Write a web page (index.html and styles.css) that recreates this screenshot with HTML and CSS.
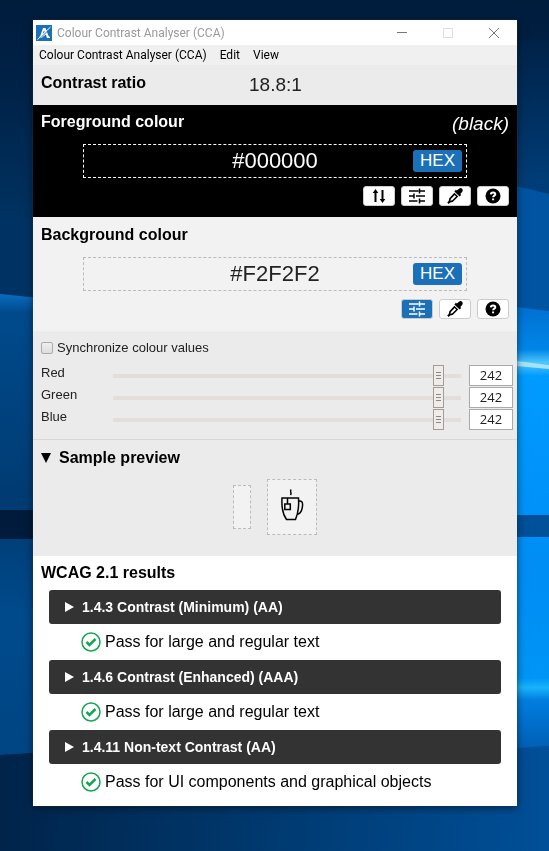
FILE: index.html
```html
<!DOCTYPE html>
<html lang="en">
<head>
<meta charset="utf-8">
<meta name="viewport" content="width=device-width, initial-scale=1">
<title>Colour Contrast Analyser (CCA)</title>
<link rel="stylesheet" href="styles.css">
</head>
<body>
<svg class="wallpaper" viewBox="0 0 549 851" preserveAspectRatio="none" aria-hidden="true">
  <defs>
    <linearGradient id="base" x1="0" y1="0" x2="0" y2="1"><stop offset="0" stop-color="#001c3d"/><stop offset=".1" stop-color="#002247"/><stop offset=".34" stop-color="#003a6e"/><stop offset="1" stop-color="#002449"/></linearGradient>
    <linearGradient id="leftPane" x1="0" y1="0" x2="0" y2="1"><stop offset="0" stop-color="#0a6cc0"/><stop offset=".04" stop-color="#004a8c"/><stop offset=".45" stop-color="#003b72"/><stop offset=".7" stop-color="#004a8c"/><stop offset="1" stop-color="#004583"/></linearGradient>
    <linearGradient id="rightTop" x1="0" y1="0" x2="0" y2="1"><stop offset="0" stop-color="#002248"/><stop offset=".5" stop-color="#003c76"/><stop offset="1" stop-color="#00509a"/></linearGradient>
    <linearGradient id="rightPane" x1="0" y1="0" x2="0" y2="1"><stop offset="0" stop-color="#006fd0"/><stop offset=".1" stop-color="#0086e8"/><stop offset=".13" stop-color="#4fc6fb"/><stop offset=".16" stop-color="#009bff"/><stop offset=".6" stop-color="#008df4"/><stop offset=".84" stop-color="#0095f6"/><stop offset=".862" stop-color="#19b3fb"/><stop offset=".89" stop-color="#007ee0"/><stop offset="1" stop-color="#005fb4"/></linearGradient>
    <linearGradient id="bottom" x1="0" y1="0" x2="1" y2="0"><stop offset="0" stop-color="#00244a"/><stop offset=".5" stop-color="#003a70"/><stop offset="1" stop-color="#004f98"/></linearGradient>
  </defs>
  <path fill="url(#base)" d="M0 0h549v851H0z"/>
  <path fill="url(#rightTop)" d="M500 40h49v280h-49z"/>
  <path fill="#0054a2" d="M500 182l49 12v130h-49z"/>
  <path fill="#003364" d="M0 213l33 6v80H0z"/>
  <path fill="url(#leftPane)" d="M0 294l60 6v453l-60 2z"/>
  <path fill="#001b3b" d="M0 510h60v29H0z"/>
  <path fill="url(#bottom)" d="M0 755l60-4 440-11h49v111H0z"/>
  <path fill="url(#rightPane)" d="M500 305l49 6v435l-49 3z"/>
  <path fill="#a5e2fa" d="M516 361l33 4v4l-33-3z"/>
  <path fill="#00509a" d="M500 515h49v22h-49z"/>
</svg>

<main class="window">
  <header class="titlebar">
    <svg class="logo" viewBox="0 0 16 16" aria-hidden="true"><path fill="#1b70b8" d="M0 0h16v16H0z"/><path fill="#fff" d="M7 3h2.5l3 8 1.5 1v1h-3l-1.200-3.500L5.500 13H3v-1l1.200-.8zM8 5.300l-1.400 4.200L9 7.800z"/><path stroke="#1b70b8" d="M3 14.300 14.300 3.400"/><path stroke="#fff" d="M1.500 14.500 14.500 2"/></svg>
    <span class="title">Colour Contrast Analyser (CCA)</span>
    <div class="controls">
      <button type="button" aria-label="Minimize"><svg viewBox="0 0 10 10"><path d="M0 4.500h10"/></svg></button>
      <button type="button" aria-label="Maximize" disabled><svg viewBox="0 0 10 10"><path d="M.5.5h9v9h-9z"/></svg></button>
      <button type="button" aria-label="Close"><svg viewBox="0 0 10 10"><path d="m0 0 10 10M10 0 0 10"/></svg></button>
    </div>
  </header>
  <nav class="menu"><button type="button">Colour Contrast Analyser (CCA)</button><button type="button">Edit</button><button type="button">View</button></nav>

  <section class="ratio"><h1>Contrast ratio</h1><output>18.8:1</output></section>

  <section class="colour foreground">
    <div class="heading"><h2><label for="fg">Foreground colour</label></h2><em>(black)</em></div>
    <div class="value"><input id="fg" type="text" value="#000000"><button type="button">HEX</button></div>
    <div class="tools">
      <button type="button" aria-label="Switch colours"><svg viewBox="0 0 16 16"><path fill="none" stroke="currentColor" stroke-width="2" d="M4.500 14V3M11.500 2v11"/><path d="M4.500 1l2.800 4H1.700zM11.500 15l-2.800-4h5.600z"/></svg></button>
      <button type="button" aria-label="Foreground sliders"><svg viewBox="0 0 16 16"><path class="line" d="M0 3h9.500M11 3h5M0 8h4.500M7 8h9M0 13h8.500M10.500 13h5.500M10.500 .5v5M5 5.500v5M10.500 10.500v5"/></svg></button>
      <button type="button" aria-label="Pick foreground"><svg viewBox="0 0 16 16"><path d="M9.800 2.600 12 .8c1.100-1 2.300-.8 3.100 0s.9 2 0 3.100l-1.800 2.200.9.900-1.600 1.600L7.400 3.400l1.500-1.600zM7.400 4.800l3.800 3.800-5.500 5.300-2.500.6L1.600 16 .2 14.600l1.500-1.500.6-2.800zM7.700 7 3.900 10.900l-.5 1.900 1.900-.5 3.800-3.900z"/></svg></button>
      <button type="button" aria-label="Foreground help"><svg viewBox="0 0 16 16"><circle cx="8" cy="8" r="7.500"/><path class="mark" d="M5.800 6.300c.2-2.600 4.500-2.500 4.500 0 0 1.400-2.200 1.400-2.200 3M8.100 10.600v1.700"/></svg></button>
    </div>
  </section>

  <section class="colour background">
    <div class="heading"><h2><label for="bg">Background colour</label></h2></div>
    <div class="value"><input id="bg" type="text" value="#F2F2F2"><button type="button">HEX</button></div>
    <div class="tools">
      <button type="button" class="active" aria-label="Background sliders" aria-pressed="true"><svg viewBox="0 0 16 16"><path class="line" d="M0 3h9.500M11 3h5M0 8h4.500M7 8h9M0 13h8.500M10.500 13h5.500M10.500 .5v5M5 5.500v5M10.500 10.500v5"/></svg></button>
      <button type="button" aria-label="Pick background"><svg viewBox="0 0 16 16"><path d="M9.800 2.600 12 .8c1.100-1 2.300-.8 3.100 0s.9 2 0 3.100l-1.800 2.200.9.900-1.600 1.600L7.400 3.400l1.500-1.600zM7.400 4.800l3.800 3.800-5.500 5.300-2.500.6L1.600 16 .2 14.600l1.500-1.500.6-2.800zM7.700 7 3.900 10.900l-.5 1.900 1.900-.5 3.800-3.900z"/></svg></button>
      <button type="button" aria-label="Background help"><svg viewBox="0 0 16 16"><circle cx="8" cy="8" r="7.500"/><path class="mark" d="M5.800 6.300c.2-2.600 4.500-2.500 4.500 0 0 1.400-2.200 1.400-2.200 3M8.100 10.600v1.700"/></svg></button>
    </div>
  </section>

  <section class="sliders">
    <label class="sync"><input type="checkbox">Synchronize colour values</label>
    <div class="channel"><label for="red">Red</label><input id="red" type="range" max="255" value="242"><input type="text" value="242" aria-label="Red value"></div>
    <div class="channel"><label for="green">Green</label><input id="green" type="range" max="255" value="242"><input type="text" value="242" aria-label="Green value"></div>
    <div class="channel"><label for="blue">Blue</label><input id="blue" type="range" max="255" value="242"><input type="text" value="242" aria-label="Blue value"></div>
  </section>

  <details class="sample" open>
    <summary><svg viewBox="0 0 10 10" aria-hidden="true"><path d="M0 0h10L5 10z"/></svg><h2>Sample preview</h2></summary>
    <div class="previews">
      <div class="swatch"></div>
      <div class="swatch picture"><svg viewBox="0 0 24 34" aria-hidden="true"><path d="M2 11h16.500c.5 7 .2 14-3 21.500H6.500C2.500 27 1.500 19 2 11zM18.500 14c3-.5 4.500 1 4 5-.5 5-2.500 8-5.500 8.500M7.500 11v6M4.800 17h5.500v5.500H4.800zM10.500 8c1.500-2-.8-3 .5-5.500"/></svg></div>
    </div>
  </details>

  <section class="results">
    <h2>WCAG 2.1 results</h2>
    <details><summary><svg viewBox="0 0 10 10" aria-hidden="true"><path d="M0 0l9 5-9 5z"/></svg>1.4.3 Contrast (Minimum) (AA)</summary></details>
    <p><svg viewBox="0 0 20 20" aria-hidden="true"><circle cx="10" cy="10" r="9"/><path d="m5.500 10 3 3 6-6"/></svg>Pass for large and regular text</p>
    <details><summary><svg viewBox="0 0 10 10" aria-hidden="true"><path d="M0 0l9 5-9 5z"/></svg>1.4.6 Contrast (Enhanced) (AAA)</summary></details>
    <p><svg viewBox="0 0 20 20" aria-hidden="true"><circle cx="10" cy="10" r="9"/><path d="m5.500 10 3 3 6-6"/></svg>Pass for large and regular text</p>
    <details><summary><svg viewBox="0 0 10 10" aria-hidden="true"><path d="M0 0l9 5-9 5z"/></svg>1.4.11 Non-text Contrast (AA)</summary></details>
    <p><svg viewBox="0 0 20 20" aria-hidden="true"><circle cx="10" cy="10" r="9"/><path d="m5.500 10 3 3 6-6"/></svg>Pass for UI components and graphical objects</p>
  </section>
</main>
</body>
</html>
```
FILE: styles.css
```css
* { box-sizing: border-box; }
body {
  margin: 0;
  padding: 20px 32px 44px 33px;
  background: #002449;
  font: 16px/18px "Liberation Sans", Arial, sans-serif;
  color: #000;
}
.wallpaper { position: fixed; inset: 0; z-index: -1; width: 100%; height: 100%; }
h1, h2, p { margin: 0; font-size: 16px; line-height: 18px; }
button, input { margin: 0; font: inherit; color: inherit; }
button { padding: 0; border: 0; background: none; }
svg { display: block; flex: none; }
summary { list-style: none; }
summary::-webkit-details-marker { display: none; }

.window { background: #ebebeb; box-shadow: 0 0 1px #444, 0 2px 8px rgba(0, 0, 0, .5); }

.titlebar { display: flex; align-items: center; height: 25px; padding-left: 3px; background: #fff; }
.logo { width: 16px; height: 16px; }
.title { margin-left: 5px; font: 12px/16px Roboto, sans-serif; color: #999; }
.controls { display: flex; margin-left: auto; }
.controls button { width: 46px; height: 25px; }
.controls svg { width: 10px; height: 10px; margin: 0 auto; fill: none; stroke: #777; overflow: visible; }
.controls button:disabled svg { stroke: #ddd; }

.menu { display: flex; gap: 13px; height: 20px; padding-left: 6px; background: #f0f0f0; font: 12px/20px Roboto, sans-serif; }

.ratio { display: grid; grid-template-columns: 4fr 5fr; height: 40px; padding: 9px 8px 0; }
.ratio output { font-size: 19px; line-height: 22px; color: #222; }

.colour { padding: 8px 8px 12px; }
.foreground { background: #000; color: #fff; padding-bottom: 11px; }
.background { background: #f2f2f2; padding-top: 9px; }
.heading { display: flex; justify-content: space-between; height: 18px; }
.heading em { font-size: 19px; line-height: 22px; }
.value { position: relative; margin: 13px 42px 8px; }
.value input {
  display: block;
  width: 100%;
  height: 34px;
  padding: 0 54px;
  border: 1px dashed #bbb;
  background: none;
  font-size: 22px;
  text-align: center;
}
.foreground .value input { border-color: #fff; }
.background .value input { color: #222; }
.value button {
  position: absolute;
  top: 6px;
  right: 5px;
  width: 49px;
  height: 22px;
  border-radius: 3px;
  background: #1b70b8;
  color: #fff;
  font-size: 17px;
}
.tools { display: flex; justify-content: flex-end; gap: 6px; }
.tools button { width: 32px; height: 20px; border: 1px solid #ccc; border-radius: 3px; background: #fff; color: #000; }
.tools svg { width: 16px; height: 16px; margin: 0 auto; fill: currentColor; }
.tools .line { fill: none; stroke: currentColor; stroke-width: 1.5; }
.tools .mark { fill: none; stroke: #fff; stroke-width: 2; }
.tools .active { background: #1b70b8; color: #fff; }

.sliders { padding: 9px 4px 8px 8px; border-bottom: 1px solid #d8d8d8; color: #222; font-size: 13px; line-height: 16px; }
.sync { display: flex; align-items: center; gap: 4px; margin-bottom: 9px; }
.sync input { width: 12px; height: 12px; appearance: none; border: 1px solid #aaa; border-radius: 2px; background: linear-gradient(#eee, #ddd); }
.channel { display: grid; grid-template-columns: 72px 1fr 52px; height: 22px; }
.channel input[type="text"] {
  width: 44px;
  height: 21px;
  justify-self: end;
  padding: 0 0 2px;
  border: 1px solid #aaa;
  background: #fff;
  font: 13px "Open Sans", sans-serif;
  text-align: center;
}
.channel input[type="range"] { width: 100%; height: 21px; appearance: none; background: linear-gradient(#e3dddb, #e3dddb) center / 100% 4px no-repeat; }
.channel input[type="range"]::-webkit-slider-thumb {
  appearance: none;
  width: 11px;
  height: 21px;
  border: 1px solid #a39b95;
  background:
    linear-gradient(#888 1px, transparent 1px 3px, #888 3px 4px, transparent 4px 6px, #888 6px) center / 5px 7px no-repeat,
    #f0ece9;
}

.sample { padding: 9px 8px 21px; }
.sample summary { display: flex; align-items: center; gap: 8px; }
.sample summary svg { width: 10px; height: 10px; }
.previews { display: flex; justify-content: center; align-items: center; gap: 16px; margin-top: 12px; }
.swatch { width: 18px; height: 44px; border: 1px dashed #bbb; background: #f2f2f2; }
.picture { display: grid; place-items: center; width: 50px; height: 56px; }
.picture svg { width: 24px; height: 34px; margin-bottom: 6px; fill: none; stroke: #000; stroke-width: 1.5; }

.results { padding: 8px 16px 6px; background: #fff; }
.results h2 { margin: 0 -8px 8px; }
.results summary {
  display: flex;
  align-items: center;
  gap: 7px;
  height: 34px;
  padding-left: 16px;
  border-radius: 3px;
  background: #333;
  color: #fff;
  font-size: 14px;
  font-weight: bold;
}
.results summary svg { width: 10px; height: 10px; fill: currentColor; }
.results p { display: flex; align-items: center; gap: 4px; min-height: 36px; padding-left: 32px; }
.results p svg { width: 20px; height: 20px; fill: none; stroke: #16a552; stroke-width: 1.5; }
.results p path { stroke-width: 2.5; }
```
